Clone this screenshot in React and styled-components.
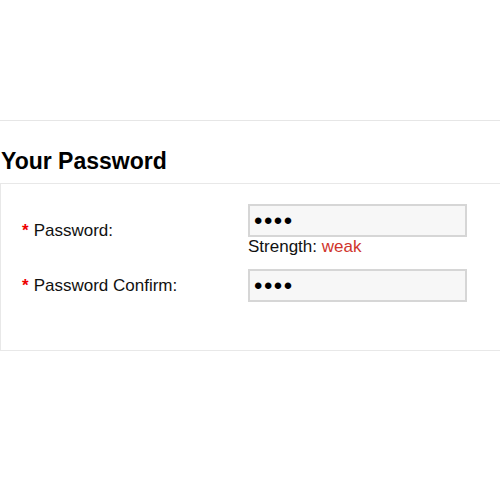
import React from 'react';
import styled, { createGlobalStyle } from 'styled-components';

const GlobalStyle = createGlobalStyle`
  html, body {
    margin: 0;
    padding: 0;
    background: #fff;
  }
  body {
    font-family: 'Liberation Sans', Arial, sans-serif;
    color: #111;
  }
`;

const Page = styled.div`
  width: 500px;
  height: 500px;
  overflow: hidden;
  padding-top: 120px;
  box-sizing: border-box;
`;

const Section = styled.section`
  border-top: 1px solid #e6e6e6;
  width: 520px;
`;

const Heading = styled.h2`
  margin: 0;
  padding: 27px 0 0 1px;
  font-size: 23px;
  line-height: 26px;
  font-weight: bold;
  color: #000;
`;

const Box = styled.div`
  margin-top: 9px;
  border: 1px solid #e8e8e8;
  border-right: none;
  padding: 20px 0 48px 21px;
  display: grid;
  grid-template-columns: 226px 220px;
  row-gap: 12px;
`;

const Label = styled.label`
  font-size: 17px;
  display: flex;
  align-items: center;
  color: #111;
`;

const Star = styled.span`
  color: #e00;
  font-weight: bold;
  margin-right: 5px;
`;

const Field = styled.div`
  display: flex;
  flex-direction: column;
`;

const Input = styled.input`
  box-sizing: border-box;
  width: 219px;
  height: 33px;
  background: #f7f7f7;
  border: 2px solid #d6d6d6;
  padding: 0 4px;
  font-size: 24px;
  letter-spacing: 1.5px;
  font-family: 'Liberation Sans', Arial, sans-serif;
  color: #000;
  outline: none;
`;

const Strength = styled.div`
  font-size: 17px;
  line-height: 20px;
  color: #111;

  span {
    color: ${p => p.$color};
  }
`;

export default function App() {
  return (
    <>
      <GlobalStyle />
      <Page>
        <Section>
          <Heading>Your Password</Heading>
          <Box>
            <Label>
              <Star>*</Star>Password:
            </Label>
            <Field>
              <Input type="password" defaultValue="abcd" readOnly />
              <Strength $color="#d0342c">
                Strength: <span>weak</span>
              </Strength>
            </Field>
            <Label>
              <Star>*</Star>Password Confirm:
            </Label>
            <Field>
              <Input type="password" defaultValue="abcd" readOnly />
            </Field>
          </Box>
        </Section>
      </Page>
    </>
  );
}
